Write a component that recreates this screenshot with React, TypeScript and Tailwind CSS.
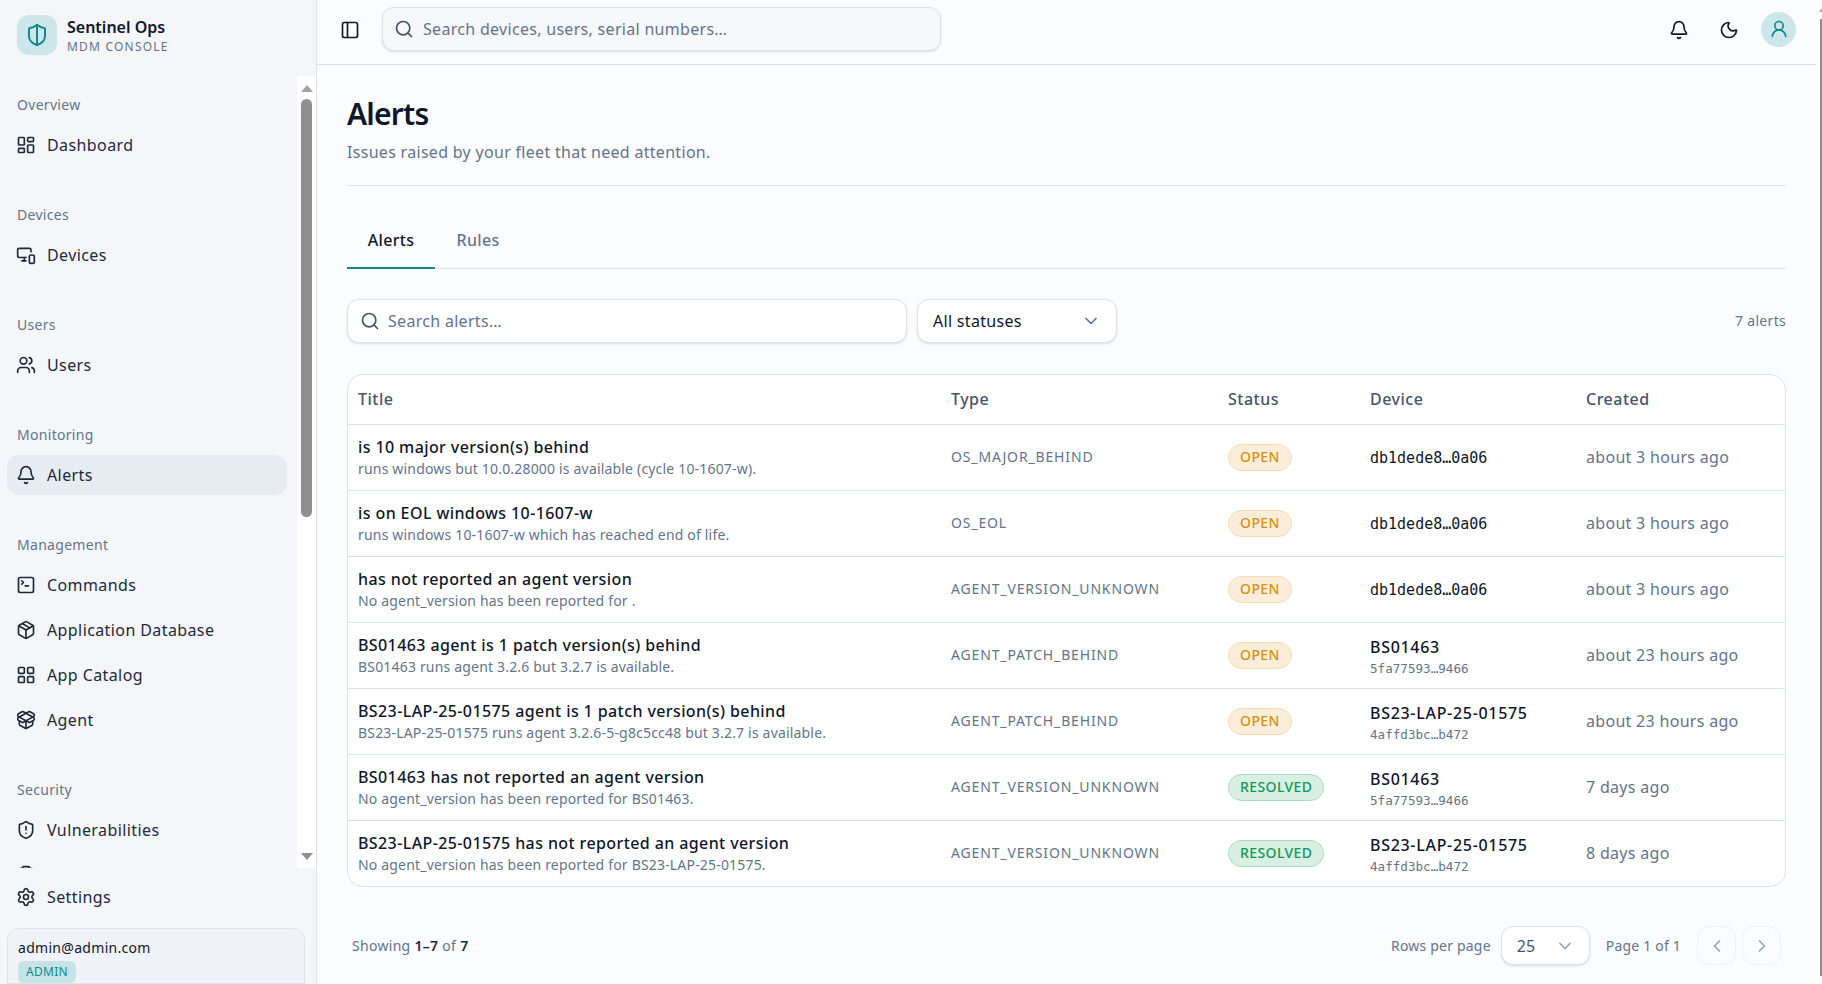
import {
  Bell,
  ChevronDown,
  ChevronLeft,
  ChevronRight,
  ClipboardCheck,
  LayoutDashboard,
  LayoutGrid,
  MonitorSmartphone,
  Moon,
  Package,
  PackageOpen,
  PanelLeft,
  Search,
  Settings,
  ShieldAlert,
  ShieldHalf,
  SquareTerminal,
  UserRound,
  Users,
} from "lucide-react";

const NAV = [
  { label: "Overview", items: [{ name: "Dashboard", icon: LayoutDashboard }] },
  { label: "Devices", items: [{ name: "Devices", icon: MonitorSmartphone }] },
  { label: "Users", items: [{ name: "Users", icon: Users }] },
  { label: "Monitoring", items: [{ name: "Alerts", icon: Bell, active: true }] },
  {
    label: "Management",
    items: [
      { name: "Commands", icon: SquareTerminal },
      { name: "Application Database", icon: Package },
      { name: "App Catalog", icon: LayoutGrid },
      { name: "Agent", icon: PackageOpen },
    ],
  },
  {
    label: "Security",
    items: [
      { name: "Vulnerabilities", icon: ShieldAlert },
      { name: "Compliance", icon: ClipboardCheck },
    ],
  },
];

const ALERTS = [
  {
    title: "is 10 major version(s) behind",
    detail: "runs windows but 10.0.28000 is available (cycle 10-1607-w).",
    type: "OS_MAJOR_BEHIND",
    status: "OPEN",
    serial: "db1dede8…0a06",
    created: "about 3 hours ago",
  },
  {
    title: "is on EOL windows 10-1607-w",
    detail: "runs windows 10-1607-w which has reached end of life.",
    type: "OS_EOL",
    status: "OPEN",
    serial: "db1dede8…0a06",
    created: "about 3 hours ago",
  },
  {
    title: "has not reported an agent version",
    detail: "No agent_version has been reported for .",
    type: "AGENT_VERSION_UNKNOWN",
    status: "OPEN",
    serial: "db1dede8…0a06",
    created: "about 3 hours ago",
  },
  {
    title: "BS01463 agent is 1 patch version(s) behind",
    detail: "BS01463 runs agent 3.2.6 but 3.2.7 is available.",
    type: "AGENT_PATCH_BEHIND",
    status: "OPEN",
    device: "BS01463",
    serial: "5fa77593…9466",
    created: "about 23 hours ago",
  },
  {
    title: "BS23-LAP-25-01575 agent is 1 patch version(s) behind",
    detail: "BS23-LAP-25-01575 runs agent 3.2.6-5-g8c5cc48 but 3.2.7 is available.",
    type: "AGENT_PATCH_BEHIND",
    status: "OPEN",
    device: "BS23-LAP-25-01575",
    serial: "4affd3bc…b472",
    created: "about 23 hours ago",
  },
  {
    title: "BS01463 has not reported an agent version",
    detail: "No agent_version has been reported for BS01463.",
    type: "AGENT_VERSION_UNKNOWN",
    status: "RESOLVED",
    device: "BS01463",
    serial: "5fa77593…9466",
    created: "7 days ago",
  },
  {
    title: "BS23-LAP-25-01575 has not reported an agent version",
    detail: "No agent_version has been reported for BS23-LAP-25-01575.",
    type: "AGENT_VERSION_UNKNOWN",
    status: "RESOLVED",
    device: "BS23-LAP-25-01575",
    serial: "4affd3bc…b472",
    created: "8 days ago",
  },
];

function Sidebar() {
  return (
    <aside className="flex h-full w-[317px] flex-shrink-0 flex-col overflow-hidden border-r border-[#dde3ea] bg-[#f4f6fa]">
      {/* ロゴ */}
      <div className="flex h-[76px] flex-shrink-0 items-start gap-[10px] pl-[17px] pt-[15px]">
        <div className="flex h-10 w-10 items-center justify-center rounded-xl bg-[#cce6e9]">
          <ShieldHalf className="h-6 w-6 text-[#0d8a8f]" strokeWidth={2} />
        </div>
        <div>
          <div className="mt-[2px] text-base leading-5 font-semibold tracking-normal text-[#0f172a]">Sentinel Ops</div>
          <div className="mt-[2px] text-xs leading-4 tracking-[0.1em] text-[#64748b]">MDM CONSOLE</div>
        </div>
      </div>

      {/* ナビ */}
      <div className="flex h-[792px] flex-shrink-0">
        <nav className="flex-1 overflow-hidden pt-[13px]">
          {NAV.map((section) => (
            <div key={section.label} className="mb-[34px]">
              <div className="flex h-8 items-center pl-[17px] text-sm text-[#64748b]">{section.label}</div>
              <div className="mt-1 flex flex-col gap-[5px] pl-[7px] pr-[10px]">
                {section.items.map((item) => (
                  <a
                    key={item.name}
                    className={`flex h-10 items-center gap-[11px] rounded-xl pl-[9px] text-base tracking-[0.4px] text-[#1e293b] ${
                      item.active ? "bg-[#e7ecf3]" : ""
                    }`}
                  >
                    <item.icon className="h-5 w-5 flex-shrink-0" strokeWidth={2} />
                    {item.name}
                  </a>
                ))}
              </div>
            </div>
          ))}
        </nav>
        {/* スクロールバー */}
        <div className="flex w-[19px] flex-shrink-0 flex-col items-center bg-white">
          <div className="mt-[9px] h-0 w-0 border-x-[6.5px] border-b-[7px] border-x-transparent border-b-[#a3a3a3]" />
          <div className="mt-[7px] h-[418px] w-[11px] rounded-[6px] bg-[#8f8f8f]" />
          <div className="mt-auto mb-[8px] h-0 w-0 border-x-[6.5px] border-t-[7px] border-x-transparent border-t-[#8f8f8f]" />
        </div>
      </div>

      {/* フッター */}
      <div className="mt-[9px] flex h-10 flex-shrink-0 items-center gap-[11px] pl-4 text-base tracking-[0.4px] text-[#1e293b]">
        <Settings className="h-5 w-5" strokeWidth={2} />
        Settings
      </div>
      <div className="mx-[7px] mt-[11px] w-[298px] flex-1 rounded-t-xl border border-[#dde3ea] bg-[#eff2f6] px-[10px] pt-[9px]">
        <div className="text-sm leading-5 text-[#0f172a]">admin@admin.com</div>
        <span className="mt-[2px] inline-block rounded-md bg-[#c6e3e7] px-2 text-xs leading-[22px] text-[#0d8a8f]">
          ADMIN
        </span>
      </div>
    </aside>
  );
}

function Header() {
  return (
    <header className="flex h-[65px] flex-shrink-0 items-center border-b border-[#dde3ea] pb-[6px] pl-[23px] pr-[20px]">
      <PanelLeft className="mt-[1px] h-5 w-5 text-[#0f172a]" strokeWidth={2} />
      <div className="ml-[22px] flex h-11 w-[559px] items-center gap-[9px] rounded-xl border border-[#dde3ea] bg-[#f6f8fb] pl-[11px] shadow-sm">
        <Search className="h-5 w-5 text-[#475569]" strokeWidth={2} />
        <span className="text-base text-[#64748b]">Search devices, users, serial numbers…</span>
      </div>
      <div className="ml-auto flex items-center">
        <Bell className="mt-[1px] mr-[30px] h-5 w-5 text-[#0f172a]" strokeWidth={2} />
        <Moon className="mt-[1px] mr-[22px] h-5 w-5 text-[#0f172a]" strokeWidth={2} />
        <div className="flex h-[35px] w-[35px] items-center justify-center rounded-full bg-[#cce6e9]">
          <UserRound className="h-5 w-5 text-[#0d8a8f]" strokeWidth={2} />
        </div>
      </div>
    </header>
  );
}

function StatusBadge({ status }: { status: string }) {
  const cls =
    status === "OPEN"
      ? "border-[#f6dcae] bg-[#faeeda] text-[#d98e0a]"
      : "border-[#a9dcc0] bg-[#d9efe3] text-[#0f9a58]";
  return (
    <span className={`inline-flex h-[27px] items-center rounded-full border px-[11px] text-sm font-medium tracking-[0.4px] ${cls}`}>
      {status}
    </span>
  );
}

function AlertsTable() {
  return (
    <div className="mt-[31px] overflow-hidden rounded-2xl border border-[#dde3ea] bg-white">
      <table className="w-full table-fixed border-collapse text-left">
        <thead>
          <tr className="h-[49px] text-base tracking-[0.5px] text-[#475569]">
            <th className="w-[593px] pl-[10px] font-medium">Title</th>
            <th className="w-[277px] pl-[10px] font-medium">Type</th>
            <th className="w-[141px] pl-[10px] font-medium">Status</th>
            <th className="w-[217px] pl-[11px] font-medium">Device</th>
            <th className="pl-[10px] font-medium">Created</th>
          </tr>
        </thead>
        <tbody>
          {ALERTS.map((a) => (
            <tr key={a.title + a.created} className="h-[66px] border-t border-[#dde3ea]">
              <td className="pl-[10px]">
                <div className="text-base leading-6 font-medium tracking-[0.4px] text-[#0f172a]">{a.title}</div>
                <div className="text-sm leading-5 tracking-[0.18px] text-[#64748b]">{a.detail}</div>
              </td>
              <td className="pl-[10px] text-sm tracking-[0.85px] text-[#64748b]">{a.type}</td>
              <td className="pl-[10px]">
                <StatusBadge status={a.status} />
              </td>
              <td className="pl-[11px]">
                {a.device ? (
                  <div className="pt-[1px]">
                    <div className="text-base leading-[26px] font-medium tracking-[0.7px] text-[#0f172a]">{a.device}</div>
                    <div className="font-['DejaVu_Sans_Mono',monospace] text-[12.6px] leading-[18px] tracking-normal text-[#64748b]">
                      {a.serial}
                    </div>
                  </div>
                ) : (
                  <span className="font-['DejaVu_Sans_Mono',monospace] text-[15px] tracking-normal text-[#0f172a]">{a.serial}</span>
                )}
              </td>
              <td className="pl-[10px] text-base text-[#64748b]">{a.created}</td>
            </tr>
          ))}
        </tbody>
      </table>
    </div>
  );
}

export default function App() {
  return (
    <div className="flex h-[984px] overflow-hidden bg-[#fbfcfe] font-['Noto_Sans',sans-serif] tracking-[0.3px]">
      <Sidebar />
      <div className="flex min-w-0 flex-1 flex-col">
        <Header />
        <main className="flex-1 overflow-hidden pl-[30px] pr-[30px]">
          {/* タイトル */}
          <div className="border-b border-[#dde3ea] pt-[31px] pb-[21px]">
            <h1 className="text-3xl leading-9 font-semibold tracking-[-0.8px] text-[#0f172a]">Alerts</h1>
            <p className="mt-[8px] text-base leading-6 text-[#64748b]">Issues raised by your fleet that need attention.</p>
          </div>

          {/* タブ */}
          <div className="mt-[30px] flex h-[53px] items-start border-b border-[#dde3ea]">
            <div className="-mb-px flex h-[53px] w-[88px] justify-center border-b-2 border-[#0d8a8f] pt-[12px] text-base font-medium text-[#0f172a]">
              Alerts
            </div>
            <div className="flex w-[86px] justify-center pt-[12px] text-base font-medium text-[#64748b]">Rules</div>
          </div>

          {/* フィルター */}
          <div className="mt-[30px] flex items-center">
            <div className="flex h-11 w-[560px] items-center gap-2 rounded-xl border border-[#dde3ea] bg-white pl-3 shadow-sm">
              <Search className="h-5 w-5 text-[#475569]" strokeWidth={2} />
              <span className="text-base text-[#64748b]">Search alerts…</span>
            </div>
            <div className="ml-[10px] flex h-11 w-[200px] items-center justify-between rounded-xl border border-[#dde3ea] bg-white pl-[15px] pr-[15px] shadow-sm">
              <span className="text-base text-[#0f172a]">All statuses</span>
              <ChevronDown className="h-5 w-5 text-[#64748b]" strokeWidth={2} />
            </div>
            <span className="ml-auto text-sm text-[#64748b]">7 alerts</span>
          </div>

          <AlertsTable />

          {/* ページネーション */}
          <div className="mt-[39px] flex items-center justify-between pl-[5px] pr-[5px]">
            <div className="text-sm text-[#64748b]">
              Showing <span className="font-semibold text-[#1e293b]">1–7</span> of{" "}
              <span className="font-semibold text-[#1e293b]">7</span>
            </div>
            <div className="flex items-center text-sm tracking-[0.2px] text-[#64748b]">
              <span>Rows per page</span>
              <div className="ml-[10px] flex h-[39px] w-[89px] items-center justify-between rounded-xl border border-[#dde3ea] bg-white pl-[15px] pr-[14px] shadow-sm">
                <span className="text-base text-[#475569]">25</span>
                <ChevronDown className="h-5 w-5 text-[#94a3b8]" strokeWidth={2} />
              </div>
              <span className="ml-[16px]">Page 1 of 1</span>
              <div className="ml-[16px] flex h-[39px] w-[39px] items-center justify-center rounded-xl border border-[#eef1f5]">
                <ChevronLeft className="h-5 w-5 text-[#94a3b8]" strokeWidth={2} />
              </div>
              <div className="ml-[6px] flex h-[39px] w-[39px] items-center justify-center rounded-xl border border-[#eef1f5]">
                <ChevronRight className="h-5 w-5 text-[#94a3b8]" strokeWidth={2} />
              </div>
            </div>
          </div>
        </main>
      </div>
      {/* ページのスクロールバー（右端で切れている） */}
      <div className="flex w-[6px] flex-shrink-0 flex-col items-end bg-white">
        <div className="mt-[8px] h-0 w-0 border-b-[4px] border-l-[3px] border-b-[#a3a3a3] border-l-transparent" />
        <div className="mt-[7px] h-[957px] w-[2px] bg-[#8f8f8f]" />
      </div>
    </div>
  );
}
